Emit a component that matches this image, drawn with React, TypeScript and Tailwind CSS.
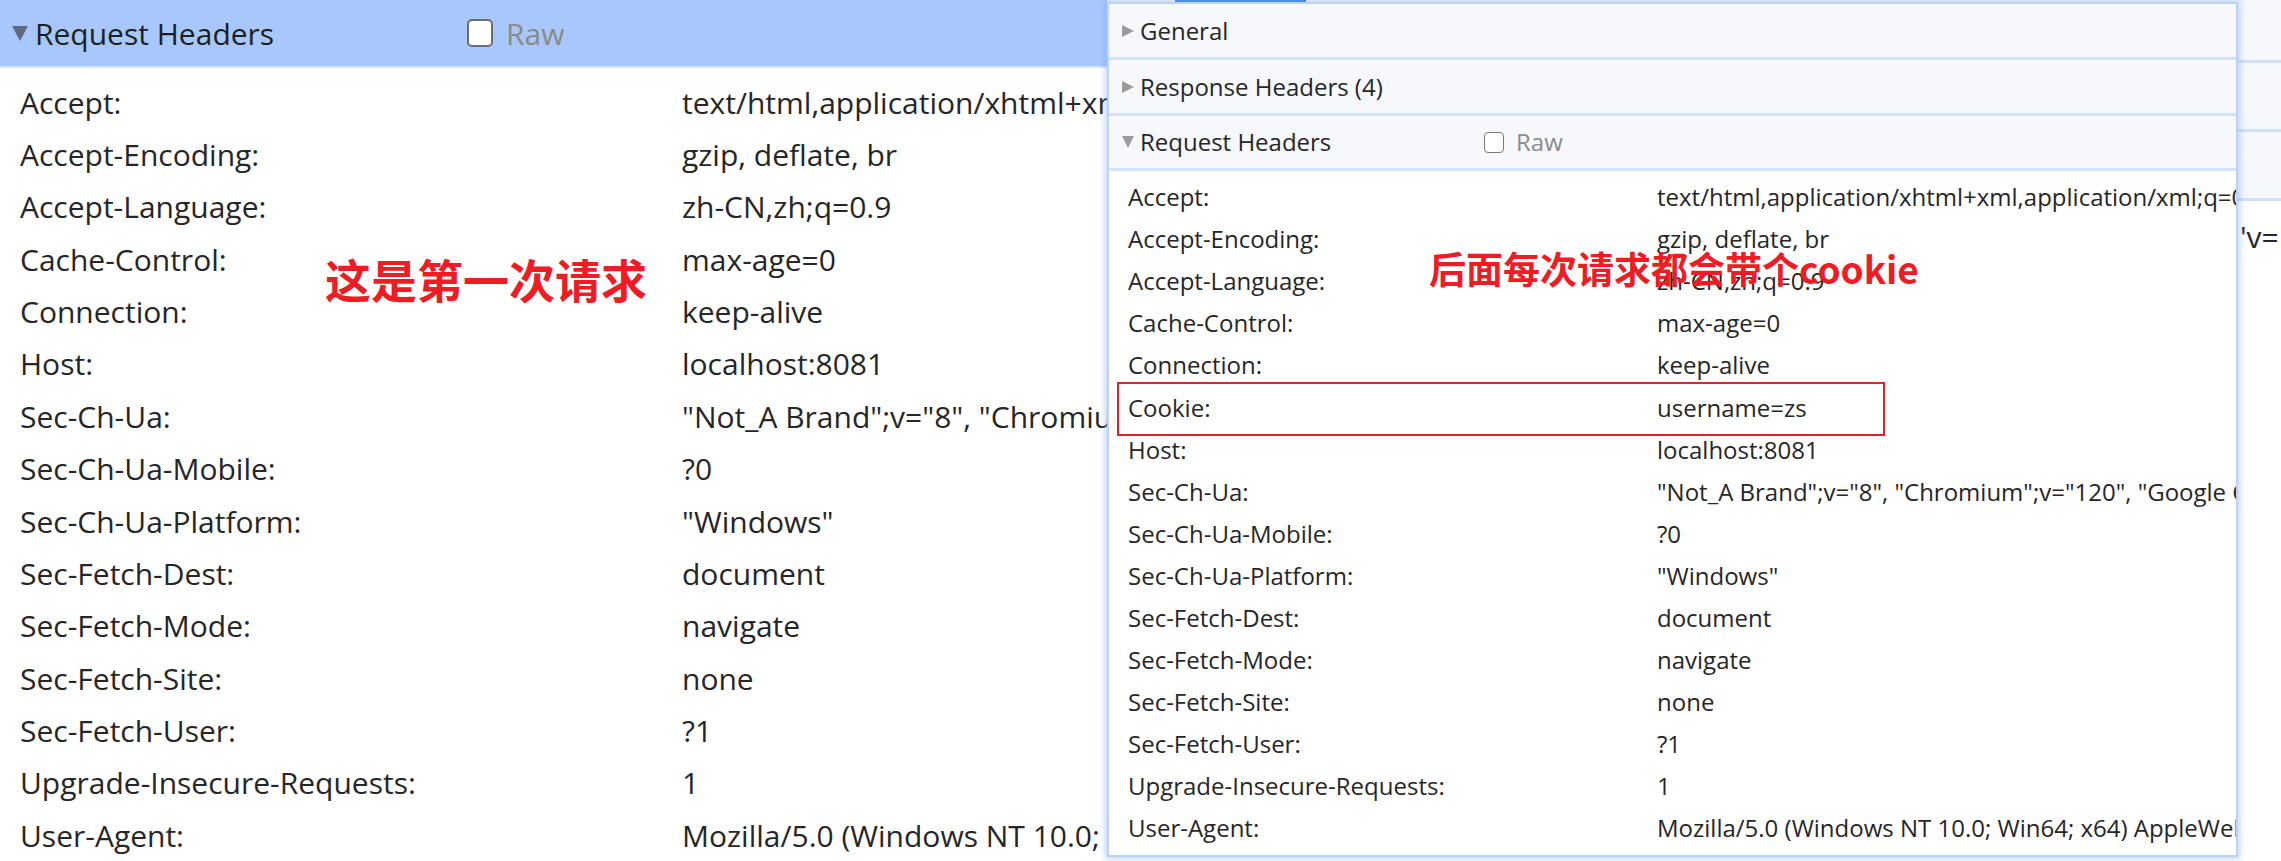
import React from 'react';

const baseRows: [string, string][] = [
  ["Accept:", "text/html,application/xhtml+xml,application/xml;q=0.9,image/avif,image/webp,image/apng,*/*;q=0.8,application/signed-exchange;v=b3;q=0.7"],
  ["Accept-Encoding:", "gzip, deflate, br"],
  ["Accept-Language:", "zh-CN,zh;q=0.9"],
  ["Cache-Control:", "max-age=0"],
  ["Connection:", "keep-alive"],
  ["Host:", "localhost:8081"],
  ["Sec-Ch-Ua:", "\"Not_A Brand\";v=\"8\", \"Chromium\";v=\"120\", \"Google Chrome\";v=\"120\""],
  ["Sec-Ch-Ua-Mobile:", "?0"],
  ["Sec-Ch-Ua-Platform:", "\"Windows\""],
  ["Sec-Fetch-Dest:", "document"],
  ["Sec-Fetch-Mode:", "navigate"],
  ["Sec-Fetch-Site:", "none"],
  ["Sec-Fetch-User:", "?1"],
  ["Upgrade-Insecure-Requests:", "1"],
  ["User-Agent:", "Mozilla/5.0 (Windows NT 10.0; Win64; x64) AppleWebKit/537.36 (KHTML, like Gecko) Chrome/120.0.0.0 Safari/537.36"],
];

const secondRows: [string, string][] = [
  ...baseRows.slice(0, 5),
  ["Cookie:", "username=zs"],
  ...baseRows.slice(5),
];

function ArrowRight() {
  return <span className="w-0 h-0 border-t-[6px] border-b-[6px] border-l-[12px] border-t-transparent border-b-transparent border-l-[#9b9b9b]" />;
}

function ArrowDown({ big }: { big?: boolean }) {
  return big ? (
    <span className="w-0 h-0 border-l-[8.5px] border-r-[8.5px] border-t-[15px] border-l-transparent border-r-transparent border-t-[#5e6b80]" />
  ) : (
    <span className="w-0 h-0 border-l-[6.5px] border-r-[6.5px] border-t-[12px] border-l-transparent border-r-transparent border-t-[#9b9b9b]" />
  );
}

function SectionHead({ title, open, raw }: { title: string; open?: boolean; raw?: boolean }) {
  return (
    <div className={`flex items-center pl-[13px] bg-[#f6f8fc] border-b-[3px] border-[#d3e2fb] ${raw ? 'h-[55px]' : 'h-[56px]'}`}>
      {open ? <ArrowDown /> : <ArrowRight />}
      <span className={`ml-[6px] text-[24px] text-[#262626] ${raw ? 'w-[344px]' : ''}`}>{title}</span>
      {raw && (
        <>
          <span className="w-[20px] h-[21px] rounded-[4px] border-[1.5px] border-[#7a7a7a] bg-white" />
          <span className="ml-[12px] text-[24px] text-[#8c8c8c]">Raw</span>
        </>
      )}
    </div>
  );
}

export default function App() {
  return (
    <div className="relative w-[2281px] h-[861px] overflow-hidden bg-white font-['Open_Sans','Noto_Sans',sans-serif] text-[#262626]">
      {/* first request, full width */}
      <div className="w-full">
        <div className="flex items-center h-[68px] bg-[#a8c7fa] border-b-2 border-[#d6e4fc] pl-[12px]">
          <ArrowDown big />
          <span className="ml-[7px] w-[432px] text-[30px] text-[#1f1f1f]">Request Headers</span>
          <span className="w-[26px] h-[28px] rounded-[5px] border-2 border-[#6d6d6d] bg-white" />
          <span className="ml-[13px] text-[30px] text-[#8a8a8a]">Raw</span>
        </div>
        <div className="pt-[8px]">
          {baseRows.map(([k, v]) => (
            <div key={k} className="flex items-center h-[52.37px] pl-[20px] text-[30px] whitespace-nowrap">
              <span className="w-[662px] shrink-0">{k}</span>
              <span>{v}</span>
            </div>
          ))}
        </div>
      </div>

      {/* screenshot peeking out behind the second one */}
      <div className="absolute left-[1107px] top-0 w-[1174px] h-full bg-white">
        <div className="h-[63px] bg-[#f6f8fc] border-b-[3px] border-[#cfe0fb]" />
        <div className="h-[69px] bg-[#f6f8fc] border-b-[3px] border-[#cfe0fb]" />
        <div className="h-[69px] bg-[#f6f8fc] border-b-[3px] border-[#cfe0fb]" />
        <div className="absolute left-[68px] top-0 w-[131px] h-[3px] bg-[#3f82e4]" />
        <div className="absolute left-[1133px] top-[214px] text-[30px] whitespace-nowrap">'v=l</div>
      </div>

      {/* second request */}
      <div className="absolute left-[1107px] top-[2px] w-[1131px] h-[855px] bg-white border-2 border-[#bcd3f7] shadow-[0_0_6px_2px_rgba(120,165,245,0.45)] overflow-hidden">
        <SectionHead title="General" />
        <SectionHead title="Response Headers (4)" />
        <SectionHead title="Request Headers" open raw />
        <div className="pt-[5px]">
          {secondRows.map(([k, v]) => (
            <div key={k} className="flex items-center h-[42.1px] pl-[19px] text-[24px] whitespace-nowrap">
              <span className="w-[529px] shrink-0">{k}</span>
              <span>{v}</span>
            </div>
          ))}
        </div>
        <div className="absolute left-[8px] top-[378px] w-[768px] h-[54px] border-2 border-[#e2232c]" />
      </div>

      {/* annotations */}
      <div className="absolute left-[325px] top-[255px] text-[46px] leading-none font-bold text-[#ee1c25] font-['Noto_Sans_CJK_SC',sans-serif] whitespace-nowrap">
        这是第一次请求
      </div>
      <div className="absolute left-[1429px] top-[250px] text-[37px] leading-none font-bold text-[#ee1c25] font-['Noto_Sans_CJK_SC',sans-serif] whitespace-nowrap">
        后面每次请求都会带个cookie
      </div>
    </div>
  );
}
